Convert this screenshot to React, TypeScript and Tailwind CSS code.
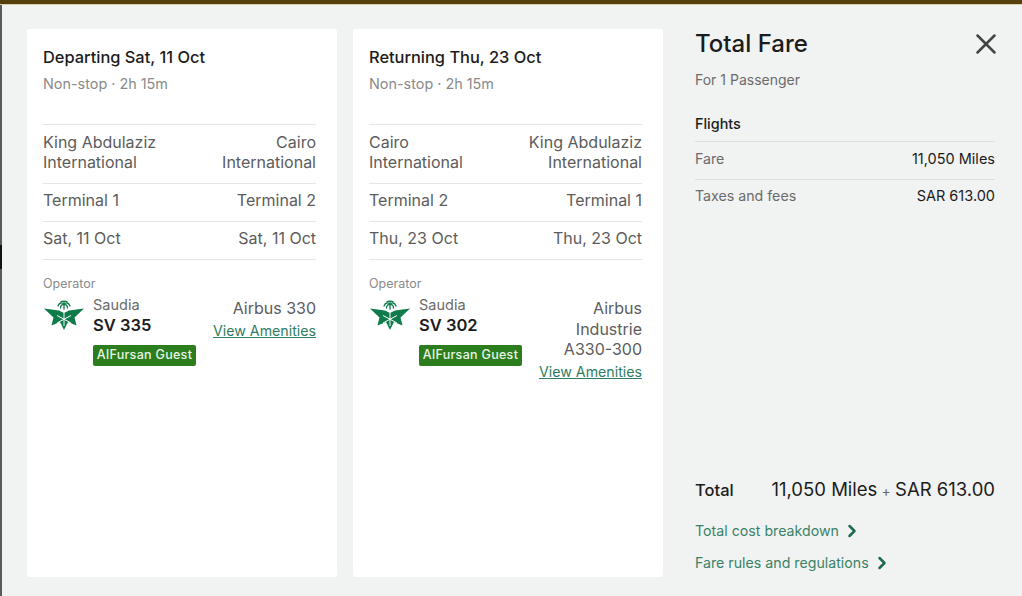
import { X, ChevronRight } from 'lucide-react';

function SaudiaLogo() {
  return (
    <svg viewBox="0 0 40 30" className="ml-[1px] h-[30px] w-10 shrink-0">
      {/* palm */}
      <g fill="none" stroke="#0f7a4a" strokeWidth="1.3" strokeLinecap="round">
        <path d="M20 4.500C18 2 15.500 2.500 14 6" />
        <path d="M20 4.500C22 2 24.500 2.500 26 6" />
        <path d="M20 4.500C18.500 4 16.500 5 16.500 8" />
        <path d="M20 4.500C21.500 4 23.500 5 23.500 8" />
        <path d="M20 1.500V9" />
        <path d="M17 1.800C18 .8 22 .8 23 1.800" />
      </g>
      {/* wings */}
      <path d="M0 8.500 15 10.500 20 13 25 10.500 40 8.500 30.500 17.500 32.500 25.500 24 22 20 30 16 22 7.500 25.500 9.500 17.500Z" fill="#0f7a4a" />
      {/* facets */}
      <g stroke="#ffffff" strokeWidth="1" fill="none">
        <path d="M20 13V26" />
        <path d="M13 15.500 27 23" />
        <path d="M27 15.500 13 23" />
      </g>
    </svg>
  );
}

type Flight = {
  title: string;
  from: string[];
  to: string[];
  fromTerminal: string;
  toTerminal: string;
  date: string;
  number: string;
  aircraft: string[];
};

const flights: Flight[] = [
  {
    title: 'Departing Sat, 11 Oct',
    from: ['King Abdulaziz', 'International'],
    to: ['Cairo', 'International'],
    fromTerminal: 'Terminal 1',
    toTerminal: 'Terminal 2',
    date: 'Sat, 11 Oct',
    number: 'SV 335',
    aircraft: ['Airbus 330'],
  },
  {
    title: 'Returning Thu, 23 Oct',
    from: ['Cairo', 'International'],
    to: ['King Abdulaziz', 'International'],
    fromTerminal: 'Terminal 2',
    toTerminal: 'Terminal 1',
    date: 'Thu, 23 Oct',
    number: 'SV 302',
    aircraft: ['Airbus', 'Industrie', 'A330-300'],
  },
];

function FlightCard({ flight }: { flight: Flight }) {
  return (
    <div className="h-[548px] w-[310px] rounded-[3px] bg-white pt-[17px] pr-[21px] pl-4">
      <h2 className="text-[16.400px] leading-[22px] font-medium text-[#1c1c1c]">{flight.title}</h2>
      <p className="mt-[5px] text-[14.400px] leading-[22px] text-[#8a8a8a]">Non-stop · 2h 15m</p>

      <div className="mt-[29px] flex justify-between border-t border-[#e6e6e6] pt-[7px] pb-[11px] text-base leading-[20px] text-[#5c5c5c]">
        <div>
          {flight.from.map((line) => (
            <div key={line}>{line}</div>
          ))}
        </div>
        <div className="text-right">
          {flight.to.map((line) => (
            <div key={line}>{line}</div>
          ))}
        </div>
      </div>
      <div className="flex h-[38px] items-center justify-between border-t border-[#e6e6e6] pb-[6px] text-base text-[#5c5c5c]">
        <span>{flight.fromTerminal}</span>
        <span>{flight.toTerminal}</span>
      </div>
      <div className="flex h-[39px] items-center justify-between border-y border-[#e6e6e6] pb-[6px] text-base text-[#5c5c5c]">
        <span>{flight.date}</span>
        <span>{flight.date}</span>
      </div>

      <p className="mt-[15px] text-[12.500px] leading-[18px] text-[#8a8a8a]">Operator</p>
      <div className="mt-[5px] flex justify-between">
        <div className="flex gap-[9px] pt-[2px]">
          <SaudiaLogo />
          <div className="-mt-[5px]">
            <div className="text-[14.500px] leading-[20px] text-[#6b6b6b]">Saudia</div>
            <div className="text-[16.500px] leading-[20px] font-semibold text-[#1c1c1c]">{flight.number}</div>
            <span className="mt-[10px] block h-[21px] w-[103px] rounded-[2px] bg-[#2b7d1e] text-center text-[12.500px] leading-[20px] font-medium tracking-[0.3px] text-[#e9f5e4]">
              AlFursan Guest
            </span>
          </div>
        </div>
        <div className="text-right">
          {flight.aircraft.map((line) => (
            <div key={line} className="text-base leading-[20.500px] text-[#5c5c5c]">
              {line}
            </div>
          ))}
          <a className="mt-[1px] block text-[14.200px] leading-[21px] text-[#2f7d62] underline">View Amenities</a>
        </div>
      </div>
    </div>
  );
}

export default function App() {
  return (
    <div className="flex h-[596px] w-[1022px] flex-col overflow-hidden bg-[#f1f2f2] font-['Inter',sans-serif]">
      <div className="h-[5px] shrink-0 border-b border-[#d9cfa8] bg-[#54400f]" />
      <div className="flex flex-1">
        {/* page behind the modal, mostly hidden */}
        <div className="flex w-[2px] shrink-0 flex-col bg-[#5a5a5a]">
          <div className="mt-[240px] h-[24px] bg-[#111111]" />
        </div>
        <div className="flex flex-1 gap-4 rounded-tl-[4px] bg-[#f1f2f2] pt-6 pl-[25px]">
          {flights.map((flight) => (
            <FlightCard key={flight.number} flight={flight} />
          ))}

          <aside className="ml-4 flex h-[548px] w-[300px] flex-col">
            <div className="flex h-[30px] items-center justify-between">
              <h1 className="text-[24px] leading-[30px] font-medium text-[#1c1c1c]">Total Fare</h1>
              <X className="-mr-[8px] h-[34px] w-[34px] text-[#444444]" strokeWidth={1.8} />
            </div>
            <p className="mt-[11px] text-[14px] leading-[20px] text-[#6b6b6b]">For 1 Passenger</p>
            <h3 className="mt-[24px] border-b border-[#dedede] pb-[7px] text-[14.400px] leading-[20px] font-medium text-[#1c1c1c]">
              Flights
            </h3>
            <div className="flex h-[38px] items-center justify-between border-b border-[#dedede] pb-[4px]">
              <span className="text-[14.200px] text-[#6b6b6b]">Fare</span>
              <span className="text-[14.500px] text-[#1c1c1c]">11,050 Miles</span>
            </div>
            <div className="flex h-[35px] items-center justify-between pb-[3px]">
              <span className="text-[14.200px] text-[#6b6b6b]">Taxes and fees</span>
              <span className="text-[14.500px] text-[#1c1c1c]">SAR 613.00</span>
            </div>

            <div className="mt-auto flex items-center justify-between pb-[4px]">
              <span className="text-[16.500px] font-medium text-[#1c1c1c]">Total</span>
              <span className="text-[18.500px] text-[#1c1c1c]">
                11,050 Miles <span className="-mx-[1px] text-[14px] text-[#6b6b6b]">+</span> SAR 613.00
              </span>
            </div>
            <a className="mt-[13px] flex items-center gap-[3px] text-[14.200px] leading-[20px] text-[#3a8268]">
              Total cost breakdown
              <ChevronRight className="h-[20px] w-[20px] text-[#1f6b50]" strokeWidth={3} />
            </a>
            <a className="mt-[12px] mb-[4px] flex items-center gap-[3px] text-[14.200px] leading-[20px] text-[#3a8268]">
              Fare rules and regulations
              <ChevronRight className="h-[20px] w-[20px] text-[#1f6b50]" strokeWidth={3} />
            </a>
          </aside>
        </div>
      </div>
    </div>
  );
}
